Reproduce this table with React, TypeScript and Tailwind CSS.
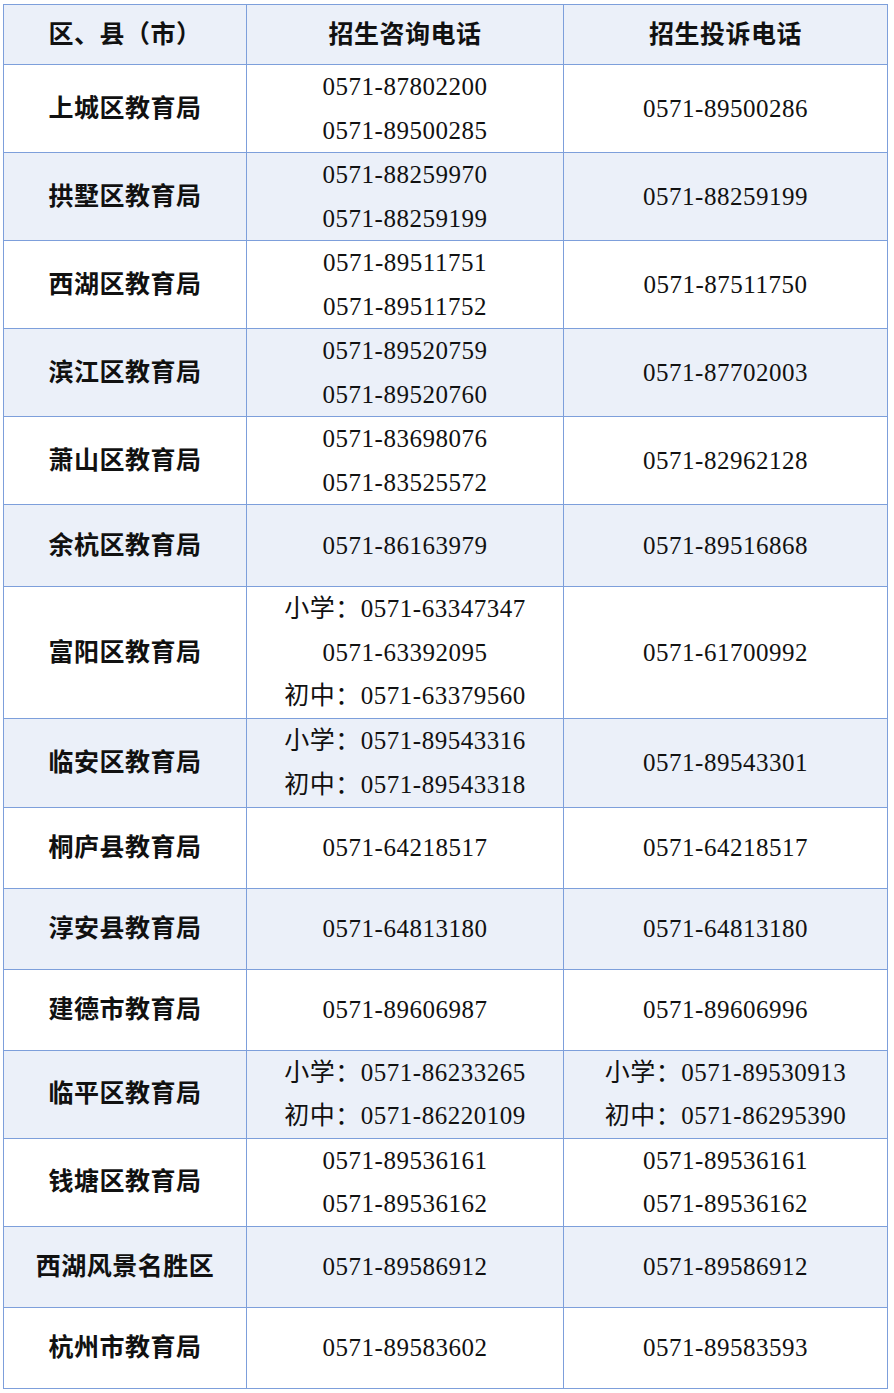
import React from "react";

type Row = {
  name: string;
  consult: string[];
  complain: string[];
  h: string;
};

const rows: Row[] = [
  { name: "上城区教育局", consult: ["0571-87802200", "0571-89500285"], complain: ["0571-89500286"], h: "h-[88px]" },
  { name: "拱墅区教育局", consult: ["0571-88259970", "0571-88259199"], complain: ["0571-88259199"], h: "h-[88px]" },
  { name: "西湖区教育局", consult: ["0571-89511751", "0571-89511752"], complain: ["0571-87511750"], h: "h-[88px]" },
  { name: "滨江区教育局", consult: ["0571-89520759", "0571-89520760"], complain: ["0571-87702003"], h: "h-[88px]" },
  { name: "萧山区教育局", consult: ["0571-83698076", "0571-83525572"], complain: ["0571-82962128"], h: "h-[88px]" },
  { name: "余杭区教育局", consult: ["0571-86163979"], complain: ["0571-89516868"], h: "h-[82px]" },
  { name: "富阳区教育局", consult: ["小学：0571-63347347", "0571-63392095", "初中：0571-63379560"], complain: ["0571-61700992"], h: "h-[131px]" },
  { name: "临安区教育局", consult: ["小学：0571-89543316", "初中：0571-89543318"], complain: ["0571-89543301"], h: "h-[89px]" },
  { name: "桐庐县教育局", consult: ["0571-64218517"], complain: ["0571-64218517"], h: "h-[81px]" },
  { name: "淳安县教育局", consult: ["0571-64813180"], complain: ["0571-64813180"], h: "h-[81px]" },
  { name: "建德市教育局", consult: ["0571-89606987"], complain: ["0571-89606996"], h: "h-[81px]" },
  { name: "临平区教育局", consult: ["小学：0571-86233265", "初中：0571-86220109"], complain: ["小学：0571-89530913", "初中：0571-86295390"], h: "h-[88px]" },
  { name: "钱塘区教育局", consult: ["0571-89536161", "0571-89536162"], complain: ["0571-89536161", "0571-89536162"], h: "h-[88px]" },
  { name: "西湖风景名胜区", consult: ["0571-89586912"], complain: ["0571-89586912"], h: "h-[81px]" },
  { name: "杭州市教育局", consult: ["0571-89583602"], complain: ["0571-89583593"], h: "h-[81px]" },
];

function Lines({ items }: { items: string[] }) {
  return (
    <div className="flex flex-col items-center leading-[43.5px]">
      {items.map((t, i) => (
        <span key={i}>{t}</span>
      ))}
    </div>
  );
}

export default function App() {
  return (
    <div className="min-h-[1393px] bg-white pl-[3px] pt-[4px]">
      <table
        className="w-[884px] table-fixed border-collapse text-[25px] tracking-[0.5px] text-[#111]"
        style={{ fontFamily: '"Liberation Serif", "Noto Sans CJK SC", serif' }}
      >
        <colgroup>
          <col className="w-[243px]" />
          <col className="w-[317px]" />
          <col className="w-[324px]" />
        </colgroup>
        <thead>
          <tr className="h-[60px] bg-[#ebf0f9]">
            <th className="border border-[#7d9fdb] text-center font-bold">区、县（市）</th>
            <th className="border border-[#7d9fdb] text-center font-bold">招生咨询电话</th>
            <th className="border border-[#7d9fdb] text-center font-bold">招生投诉电话</th>
          </tr>
        </thead>
        <tbody>
          {rows.map((r, i) => (
            <tr key={r.name} className={`${r.h} ${i % 2 === 1 ? "bg-[#ebf0f9]" : "bg-white"}`}>
              <td className="border border-[#7d9fdb] p-0 text-center font-bold">{r.name}</td>
              <td className="border border-[#7d9fdb] p-0 text-center">
                <Lines items={r.consult} />
              </td>
              <td className="border border-[#7d9fdb] p-0 text-center">
                <Lines items={r.complain} />
              </td>
            </tr>
          ))}
        </tbody>
      </table>
    </div>
  );
}
